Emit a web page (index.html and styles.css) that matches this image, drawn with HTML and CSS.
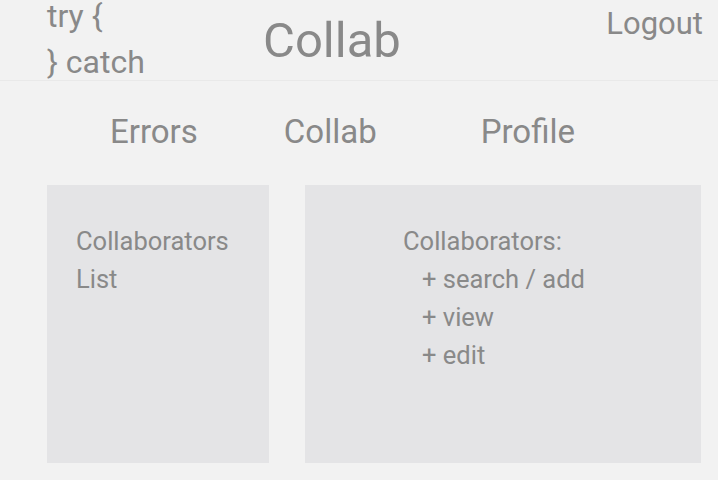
FILE: index.html
```html
<!DOCTYPE html>
<html>
<head>
<meta charset="utf-8">
<link rel="stylesheet" href="styles.css">
</head>
<body>
<header class="topbar">
  <div class="brand">
    <div class="brand-line">try {</div>
    <div class="brand-line">} catch</div>
  </div>
  <div class="title">Collab</div>
  <div class="spacer"></div>
  <a class="logout">Logout</a>
</header>
<nav class="tabs">
  <a class="tab">Errors</a>
  <a class="tab">Collab</a>
  <a class="tab tab-last">Profile</a>
</nav>
<main class="content">
  <section class="panel panel-list">
    <div>Collaborators</div>
    <div>List</div>
  </section>
  <section class="panel panel-detail">
    <div>Collaborators:</div>
    <div class="sub">+ search / add</div>
    <div class="sub">+ view</div>
    <div class="sub">+ edit</div>
  </section>
</main>
</body>
</html>
```
FILE: styles.css
```css
html, body {
  margin: 0;
  padding: 0;
}
body {
  background: #f2f2f2;
  color: #898989;
  font-family: Roboto, "Noto Sans", sans-serif;
  width: 718px;
  height: 480px;
  overflow: hidden;
}
.topbar {
  display: flex;
  height: 80px;
  border-bottom: 1px solid #e9e9e9;
  padding: 0 15px 0 47px;
}
.brand {
  display: flex;
  flex-direction: column;
  gap: 14px;
  align-self: flex-start;
  width: 216px;
  font-size: 32px;
  line-height: 32px;
}
.title {
  align-self: center;
  font-size: 49px;
}
.spacer {
  flex: 1;
}
.logout {
  align-self: flex-start;
  padding-top: 5px;
  font-size: 31px;
}
.tabs {
  display: flex;
  padding: 31px 0 0 110px;
  font-size: 33px;
  gap: 86px;
}
.tab-last {
  margin-left: 18px;
}
.content {
  display: flex;
  gap: 36px;
  padding: 34px 17px 0 47px;
}
.panel {
  background: #e4e4e6;
  height: 278px;
  box-sizing: border-box;
  font-size: 25.5px;
  line-height: 38px;
  padding-top: 37px;
}
.panel-list {
  width: 222px;
  padding-left: 29px;
}
.panel-detail {
  flex: 1;
  padding-left: 98px;
}
.sub {
  padding-left: 19px;
}
```
